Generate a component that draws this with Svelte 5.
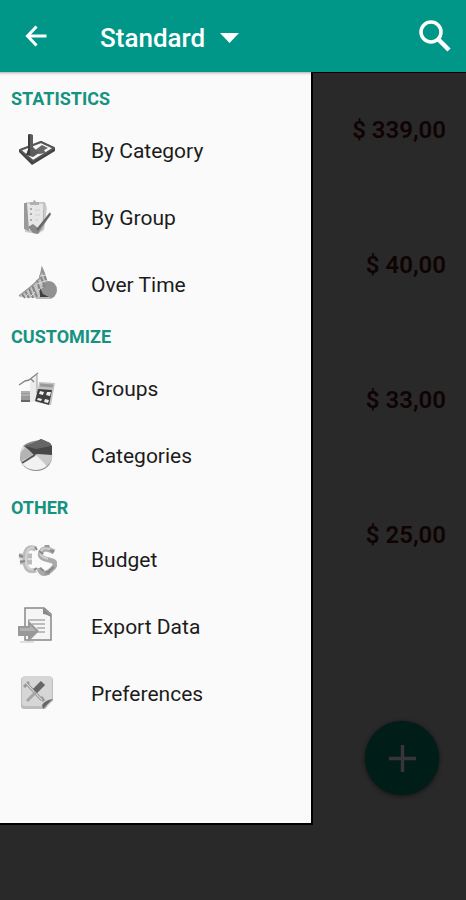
<script>
	const sections = [
		{
			title: 'STATISTICS',
			items: [
				{ icon: 'category', label: 'By Category' },
				{ icon: 'group', label: 'By Group' },
				{ icon: 'time', label: 'Over Time' }
			]
		},
		{
			title: 'CUSTOMIZE',
			items: [
				{ icon: 'groups', label: 'Groups' },
				{ icon: 'pie', label: 'Categories' }
			]
		},
		{
			title: 'OTHER',
			items: [
				{ icon: 'budget', label: 'Budget' },
				{ icon: 'export', label: 'Export Data' },
				{ icon: 'prefs', label: 'Preferences' }
			]
		}
	];
	const amounts = ['$ 339,00', '$ 40,00', '$ 33,00', '$ 25,00'];
	let drawerOpen = $state(true);
</script>

<div class="app">
	<header class="toolbar">
		<button class="back" aria-label="Back" onclick={() => (drawerOpen = !drawerOpen)}>
			<svg width="24" height="24" viewBox="0 0 24 24" fill="none" stroke="#fff" stroke-width="3">
				<path d="M12.5 2.5 3.5 12l9 9.5M3 12h19.5" />
			</svg>
		</button>
		<button class="account">
			Standard
			<svg width="19" height="10" viewBox="0 0 19 10"><path d="M0 0h19L9.5 10Z" fill="#fff" /></svg>
		</button>
		<button class="search" aria-label="Search">
			<svg width="32" height="32" viewBox="0 0 32 32" fill="none" stroke="#fff">
				<circle cx="12" cy="12" r="10" stroke-width="3.5" />
				<path d="M19 19 30 30" stroke-width="4.5" />
			</svg>
		</button>
	</header>

	<div class="content">
		<main class="list">
			{#each amounts as amount}
				<div class="entry">{amount}</div>
			{/each}
		</main>

		<button class="fab" aria-label="Add">
			<svg width="27" height="27" viewBox="0 0 27 27"><path d="M13.5 0v27M0 13.5h27" stroke="#373537" stroke-width="3.5" /></svg>
		</button>

		{#if drawerOpen}
			<nav class="drawer">
				{#each sections as section}
					<h2>{section.title}</h2>
					{#each section.items as item}
						<a href="#{item.icon}">
							<svg class="icon" width="40" height="40" viewBox="0 0 40 40">
								{#if item.icon === 'category'}
									<path d="M2 19 24 10l14 7v3L15 34 2 21Z" fill="#444" />
									<path d="M3 19 24 11l13 6-21 13Z" fill="#f6f6f6" stroke="#555" stroke-width="2" stroke-linejoin="round" />
									<path d="m17 20 8-6 6 3-4 2 2 3-7 1Z" fill="#666" />
									<path d="M11 4q2-2 5 0v12l6 6-6 4-7-2 2-5Z" fill="#5c5c5c" />
									<path d="M11 4q1-1 2-1v21l-4 0 2-5Z" fill="#3c3c3c" />
								{:else if item.icon === 'group'}
									<path d="m8 5 20-1 2 6-3 22-6 4-13-2Z" fill="#ccc" />
									<path d="M9 5h18l-1 26-15 2Z" fill="#e6e6e6" stroke="#b5b5b5" />
									<path d="M7 5h3l2 28-5-2Z" fill="#9a9a9a" />
									<path d="M13 7V4h3q1-4 3 0h3v3Z" fill="#b0b0b0" />
									<path d="M13 11h2m-2 5h2m-2 6h2" stroke="#999" stroke-width="1.5" />
									<path d="M18 12h5m-5 5h5m-5 5h3" stroke="#d0d0d0" />
									<path d="m11 29 5-3 5 4L33 14l1 2-13 20-5-1Z" fill="#888" />
									<path d="m20 32 13-16" stroke="#666" stroke-width="2" />
								{:else if item.icon === 'time'}
									<path d="m2 32 13-12 7-7 3-10 4 8 3 9-1 13H19Z" fill="#c4c4c4" />
									<ellipse cx="32" cy="25" rx="8" ry="9" fill="#919191" />
									<path d="m5 29 3 4m0-7 4 7m0-10 4 10m-1-13 5 12m0-17 4 15m-1-20 5 12m-3-18 4 11" stroke="#858585" stroke-width="2" />
									<path d="m2 31 14-11 7-7 2-10 3 7" fill="none" stroke="#999" stroke-width="1.5" />
									<path d="m8 32 3-3m3 2 4-4m2-1 6-4m-6-3 8-3m-5-5 6-1" stroke="#dedede" />
									<path d="m23 23 3 6 6 3-3 2h-6Z" fill="#3f3f3f" />
									<path d="M19 33h14" stroke="#b8b8b8" stroke-width="2" />
								{:else if item.icon === 'groups'}
									<path d="M4 22h9v11H4Z" fill="#999" />
									<path d="M4 23h9m-9 3h9" stroke="#c5c5c5" />
									<path d="M4 32h9" stroke="#666" stroke-width="2" />
									<path d="m13 14 7-8v27h-7Z" fill="#ececec" />
									<path d="m2 16 6-4 4-1 9-7M14 10l3 3" fill="none" stroke="#888" stroke-width="1.5" />
									<path d="M20 6v18" stroke="#999" />
									<path d="m22 13 16 1-4 22-15-3Z" fill="#c2c2c2" />
									<path d="m23 16 13 1" stroke="#999" stroke-width="3" />
									<path d="m21 20 14 1-3 15-14-4Z" fill="#3f3f3f" />
									<path d="m23 22 4 1-1 3-4-1Zm7 1 4 0-1 4-4-1Zm-9 6 4 1-1 2-4-1Zm7 1 4 1-1 3-4-1Z" fill="#eee" />
								{:else if item.icon === 'pie'}
									<ellipse cx="19" cy="21" rx="16" ry="14" fill="#8c8c8c" />
									<ellipse cx="19" cy="18" rx="16" ry="13" fill="#ddd" />
									<path d="M18 19 4 25q-3-8 4-13Z" fill="#b4b4b4" />
									<path d="m19 18 11 12q7-6 5-13Z" fill="#c8c8c8" />
									<path d="M18 19 4 26q4 7 14 8 7 0 12-4Z" fill="#f2f2f2" />
									<path d="M18 19 6 10q6-5 18-6Z" fill="#888" />
									<path d="m8 10 9-3 7-4 9 4 2 3v9l-14-1-4 1Z" fill="#474747" />
									<path d="m8 10 9-3 7-4 9 4 1 3-15 3Z" fill="#666" />
									<path d="M18 19 5 27" stroke="#555" stroke-width="2" />
								{:else if item.icon === 'budget'}
									<path d="M19 9Q8 4 8 19t11 11M2 16h13M3 22h12" fill="none" stroke="#bcbcbc" stroke-width="5" />
									<path d="M19 8Q10 5 9 18t9 11" fill="none" stroke="#d4d4d4" stroke-width="2" />
									<path d="M37 12q-10-6-13 0t8 8 2 10-12-2" fill="none" stroke="#aaa" stroke-width="5" />
									<path d="M30 5v4m0 22v4" stroke="#999" stroke-width="5" />
									<path d="M35 10q-8-4-11 1t7 8" fill="none" stroke="#d0d0d0" stroke-width="2" />
									<path d="m2 15 4 2m-3 5 5-1m10-14 2 3m-3 20 3-2m2-17 4 3m7-4 4 2m-14 16 4 3m4 1 6-5M29 32h4" stroke="#888" stroke-width="2" />
								{:else if item.icon === 'export'}
									<path d="M8 1h19l7 6v26H8Z" fill="#f5f5f5" stroke="#888" stroke-width="1.5" />
									<path d="m26 1 8 7v2q-5-3-8-3Z" fill="#888" />
									<path d="M11 13h17m-13 4h13m-8 4h8m-8 4h8" stroke="#aaa" stroke-width="1.5" />
									<path d="M1 19h10v-6l11 11-11 11v-6H1Z" fill="#999" />
									<path d="M3 21h10v-3l6 6H3Z" fill="#b2b2b2" />
									<path d="M3 35h14" stroke="#c5c5c5" />
								{:else}
									<rect x="4" y="3" width="32" height="32" rx="3" fill="#bdbdbd" />
									<rect x="5" y="2" width="30" height="30" rx="3" fill="#d6d6d6" />
									<path d="m9 9 16 17M7 13l5-5m12 15 3 4" stroke="#999" stroke-width="3" />
									<path d="m9 9 16 17" stroke="#eee" />
									<path d="m10 27 9-9" stroke="#a5a5a5" stroke-width="3" />
									<path d="m18 17 8-8" stroke="#666" stroke-width="6" />
									<path d="m36 25-10 10-1-4q3-5 11-6Z" fill="#686868" />
									<path d="m36 27-8 8h8Z" fill="#fafafa" />
								{/if}
							</svg>
							<span>{item.label}</span>
						</a>
					{/each}
				{/each}
			</nav>
		{/if}
	</div>
</div>

<style>
	:global(body) {
		background: #292929;
	}
	.app {
		display: flex;
		flex-direction: column;
		min-height: 100vh;
		font-family: Roboto, sans-serif;
		background: #292929;
	}
	button {
		display: flex;
		align-items: center;
		padding: 0;
		border: 0;
		background: none;
		color: inherit;
		font: inherit;
		cursor: pointer;
	}
	.toolbar {
		display: flex;
		align-items: center;
		height: 72px;
		padding: 0 15px 0 24px;
		background: #009788;
		color: #fff;
	}
	.account {
		gap: 15px;
		margin-left: 52px;
		padding-top: 3px;
		font-size: 26px;
		font-weight: 500;
		line-height: 32px;
	}
	.search {
		margin-left: auto;
	}
	.content {
		position: relative;
		flex: 1;
		border-top: 1px solid #000;
	}
	.entry {
		box-sizing: border-box;
		height: 135px;
		padding: 43px 20px 0 0;
		color: #100304;
		font-size: 24px;
		font-weight: 600;
		line-height: 28px;
		text-align: right;
	}
	.fab {
		position: absolute;
		right: 27px;
		bottom: 105px;
		justify-content: center;
		width: 74px;
		height: 74px;
		border-radius: 50%;
		background: #001d17;
		box-shadow: 0 1px 4px #111;
	}
	.drawer {
		position: absolute;
		top: -1px;
		bottom: 75px;
		left: 0;
		width: 67%;
		padding-top: 8px;
		border: solid #000;
		border-width: 0 2px 2px 0;
		background: #fafafa;
		box-shadow: inset 0 4px 3px -3px #aaa;
		box-sizing: border-box;
		min-width: 313px;
		overflow: hidden;
	}
	h2 {
		margin: 0;
		padding-left: 11px;
		color: #159380;
		font-size: 18px;
		font-weight: 700;
		line-height: 37px;
	}
	.drawer a {
		display: flex;
		align-items: center;
		gap: 34px;
		height: 67px;
		padding-left: 17px;
		color: #1c1c1c;
		font-size: 21px;
		text-decoration: none;
	}
	.icon {
		flex: none;
	}
</style>
